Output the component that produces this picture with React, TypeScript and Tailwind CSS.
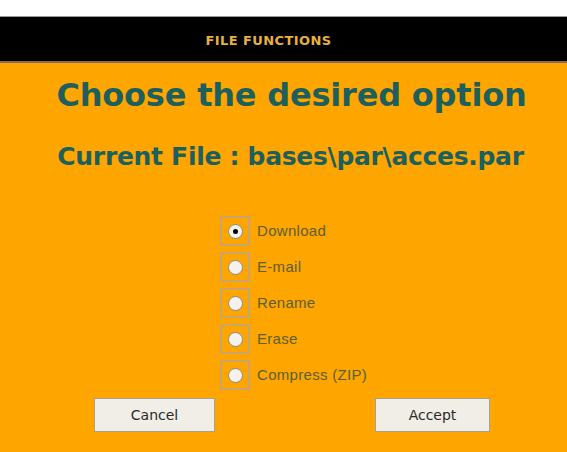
import { useState } from 'react';

const options = ['Download', 'E-mail', 'Rename', 'Erase', 'Compress (ZIP)'];

function Radio({ checked, onClick }: { checked: boolean; onClick: () => void }) {
  return (
    <button
      onClick={onClick}
      className="h-[30px] w-[30px] flex items-center justify-center border-2 border-[#c9a56a] bg-[#ffa500]"
    >
      <span className="h-[15px] w-[15px] rounded-full bg-[#f4f2ea] border border-[#8a8a80] flex items-center justify-center">
        {checked && <span className="h-[5px] w-[5px] rounded-full bg-black" />}
      </span>
    </button>
  );
}

export default function App() {
  const [selected, setSelected] = useState(0);

  return (
    <div className="w-[567px] h-[452px] bg-white pt-4 flex flex-col" style={{ fontFamily: '"DejaVu Sans", Verdana, sans-serif' }}>
      {/* Header bar */}
      <div className="h-[47px] shrink-0 bg-black border-t border-[#9a9a9a] border-b-2 border-b-[#8a6a60] flex items-center justify-center">
        <span className="text-[13px] font-bold text-[#e8b040] tracking-[0.4px] pr-[30px] pt-[3px]">
          FILE FUNCTIONS
        </span>
      </div>

      {/* Body */}
      <main className="flex-1 bg-[#ffa500] flex flex-col items-center">
        <h1 className="mt-[12px] pl-[16px] text-[32px] leading-[40px] font-bold text-[#1c5f5c] tracking-[-0.2px]">
          Choose the desired option
        </h1>
        <h2 className="mt-[26px] pl-[14px] text-[25px] leading-[32px] font-bold text-[#1c5f5c] tracking-[-0.3px]">
          Current File : bases\par\acces.par
        </h2>

        <div className="mt-[43px] flex flex-col gap-[6px] self-start ml-[220px]">
          {options.map((opt, i) => (
            <label key={opt} className="flex items-center gap-[7px] cursor-pointer">
              <Radio checked={selected === i} onClick={() => setSelected(i)} />
              <span
                className="text-[15px] text-[#5a6030] tracking-[0.3px]"
                style={{ fontFamily: '"Liberation Sans", Arial, sans-serif' }}
              >
                {opt}
              </span>
            </label>
          ))}
        </div>

        <div className="mt-[8px] w-full flex justify-between pl-[94px] pr-[77px]">
          <button className="w-[121px] h-[34px] bg-[#f0eee6] border border-[#a8a090] text-[14px] text-[#2a2a2a]">
            Cancel
          </button>
          <button className="w-[115px] h-[34px] bg-[#f0eee6] border border-[#a8a090] text-[14px] text-[#2a2a2a]">
            Accept
          </button>
        </div>
      </main>
    </div>
  );
}
